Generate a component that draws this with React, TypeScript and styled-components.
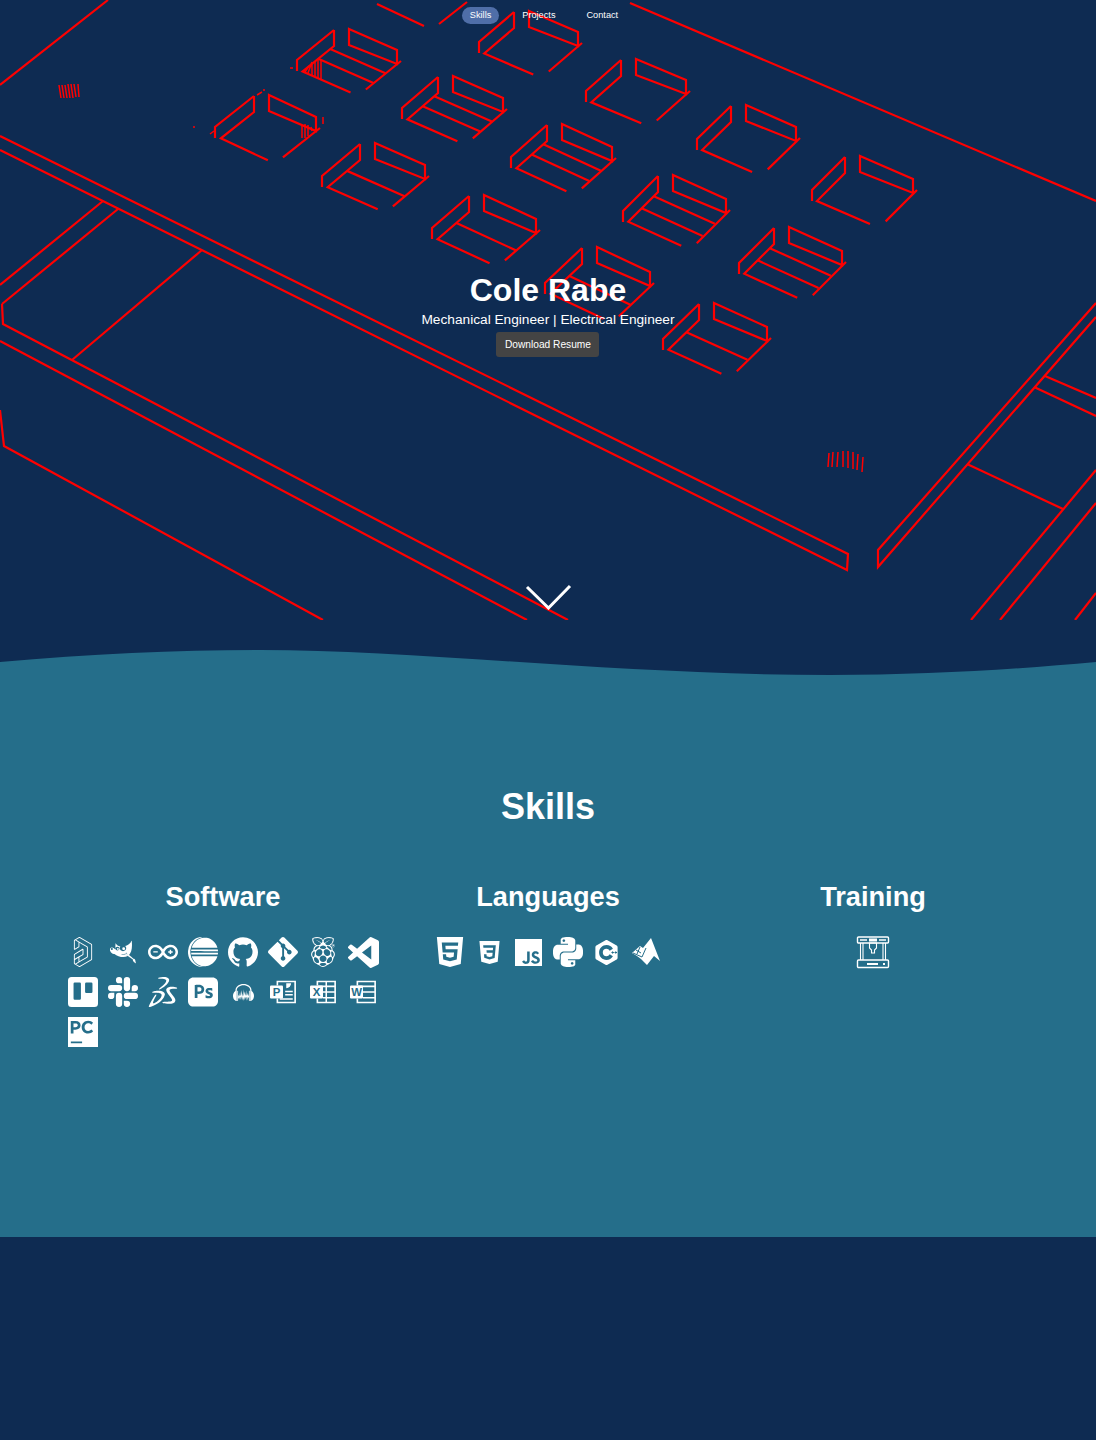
import styled, { createGlobalStyle } from "styled-components";
import type { IconType } from "react-icons";
import {
  SiAltiumdesigner,
  SiGimp,
  SiArduino,
  SiEclipseide,
  SiGithub,
  SiGit,
  SiRaspberrypi,
  SiTrello,
  SiSlack,
  SiDassaultsystemes,
  SiAdobephotoshop,
  SiAudacity,
  SiPycharm,
  SiHtml5,
  SiCss3,
  SiJavascript,
  SiPython,
  SiCplusplus,
} from "react-icons/si";

const NAVY = "#0e2b52";
const TEAL = "#256e8a";

const GlobalStyle = createGlobalStyle`
  html, body {
    margin: 0;
    padding: 0;
    background: ${NAVY};
    font-family: "Liberation Sans", Arial, sans-serif;
    color: #fff;
  }
`;

const Page = styled.div`
  width: 1096px;
  min-height: 1440px;
  background: ${NAVY};
`;

const Hero = styled.header`
  position: relative;
  height: 620px;
  overflow: hidden;
  display: flex;
  flex-direction: column;
  align-items: center;
`;

const Backdrop = styled.svg`
  position: absolute;
  inset: 0;
  width: 1096px;
  height: 620px;
  fill: none;
  stroke: #f00;
  stroke-width: 2.2;
`;

const Nav = styled.nav`
  position: relative;
  display: flex;
  gap: 15px;
  padding: 7px 8px 0 0;
`;

const NavLink = styled.a<{ $active?: boolean }>`
  height: 17px;
  line-height: 17px;
  padding: 0 8px;
  font-size: 9.2px;
  border-radius: 9px;
  color: #fff;
  background: ${(p) => (p.$active ? "#4f6ea8" : "transparent")};
`;

const HeroText = styled.div`
  position: relative;
  display: flex;
  flex-direction: column;
  align-items: center;
  margin-top: 248px;
`;

const Name = styled.h1`
  margin: 0;
  font-size: 32px;
  line-height: 37px;
  font-weight: 700;
`;

const Role = styled.p`
  margin: 3px 0 0;
  font-size: 13.7px;
  line-height: 16px;
`;

const ResumeButton = styled.button`
  margin-top: 4px;
  width: 103px;
  height: 25px;
  padding: 0;
  border: 0;
  border-radius: 3px;
  background: #444444;
  color: #fff;
  font: 10.2px "Liberation Sans", Arial, sans-serif;
`;

const ScrollArrow = styled.svg`
  position: absolute;
  left: 525px;
  top: 584px;
  width: 47px;
  height: 26px;
  fill: none;
  stroke: #fff;
  stroke-width: 3;
`;

const Wave = styled.svg`
  display: block;
  width: 1096px;
  height: 30px;
  margin-top: 30px;
`;

const SkillsSection = styled.section`
  background: ${TEAL};
  height: 557px;
  padding-top: 105px;
  box-sizing: border-box;
  display: flex;
  flex-direction: column;
  align-items: center;
`;

const SkillsTitle = styled.h2`
  margin: 0;
  font-size: 36px;
  line-height: 44px;
  font-weight: 700;
`;

const Columns = styled.div`
  display: grid;
  grid-template-columns: repeat(3, 325px);
  margin-top: 52px;
`;

const Column = styled.div`
  display: flex;
  flex-direction: column;
  align-items: center;
`;

const ColumnTitle = styled.h3`
  margin: 0 0 19px;
  font-size: 27.2px;
  line-height: 32px;
  font-weight: 700;
`;

const IconGrid = styled.div<{ $start?: boolean }>`
  display: flex;
  flex-wrap: wrap;
  width: 320px;
  justify-content: ${(p) => (p.$start ? "flex-start" : "center")};
`;

const IconCell = styled.div<{ $size: number; $pitch: number }>`
  width: ${(p) => p.$pitch}px;
  height: 40px;
  display: flex;
  align-items: center;
  justify-content: center;
  color: #fff;
  font-size: ${(p) => p.$size}px;
`;

type Vec = [number, number];
// p: top of left wall, l: along the left wall, r: along the right wall, lines: floor lines as fraction of the left edge
type Cell = { p: Vec; l: Vec; r: Vec; lines: number[] };

const cells: Cell[] = [
  { p: [514, 12], l: [-35, 30], r: [49, 21], lines: [] },
  { p: [334, 30], l: [-37, 30], r: [48, 21], lines: [0.12, 0.5] },
  { p: [621, 60], l: [-35, 31], r: [50, 21], lines: [] },
  { p: [438, 77], l: [-36, 31], r: [50, 22], lines: [0.12, 0.5] },
  { p: [254, 96], l: [-39, 31], r: [47, 22], lines: [] },
  { p: [360, 144], l: [-38, 32], r: [50, 22], lines: [0.4] },
  { p: [547, 125], l: [-36, 32], r: [50, 23], lines: [0.12, 0.5] },
  { p: [731, 106], l: [-34, 33], r: [50, 22], lines: [] },
  { p: [845, 157], l: [-33, 33], r: [53, 23], lines: [] },
  { p: [469, 196], l: [-37, 32], r: [52, 24], lines: [0.4] },
  { p: [658, 176], l: [-35, 35], r: [53, 24], lines: [0.14, 0.55] },
  { p: [774, 228], l: [-35, 35], r: [53, 24], lines: [0.14, 0.55] },
  { p: [582, 248], l: [-37, 35], r: [53, 25], lines: [0.4] },
  { p: [699, 304], l: [-36, 35], r: [53, 24], lines: [0.41] },
];

const structure = [
  "M108 0 0 85",
  "M377 4 424 26",
  "M439 24 467 2",
  "M630 3 1096 201",
  "M0 136 848 554 847 570 0 150",
  "M0 285 103 201",
  "M2 304 118 209",
  "M72 360 202 250",
  "M2 304 3 324 568 620",
  "M0 341 527 620",
  "M0 410 4 446 323 620",
  "M1096 303 878 550 878 567 1096 317",
  "M1045 376 1096 398",
  "M1034 387 1096 416",
  "M967 464 1063 509",
  "M971 620 1096 470",
  "M1000 620 1096 503",
  "M1075 620 1096 593",
];

const hatches = [
  "M59 85 61 98M62 85 64 98M65 85 67 98M68 84 70 98M71 84 73 98M74 84 76 97M78 84 79 97",
  "M829 453 828 467M833 452 832 467M838 452 837 467M843 451 843 467M848 451 848 468M853 452 853 469M858 454 857 470M863 457 862 472",
  "M305 72 309 66M308 73 312 62M312 75 312 63M315 76 315 61M318 78 318 60M321 79 321 60",
  "M302 125 302 138M305 124 305 138M308 125 308 136M311 127 312 131",
  "M323 117 323 124M290 68 293 68M193 127 195 127M263 90 265 90M210 134 214 131M257 95 262 92",
];

const BoardCell = ({ p, l, r, lines }: Cell) => {
  const [x, y] = p;
  const bx = x;
  const by = y + 16;
  const fx = bx + l[0] * 0.85;
  const fy = by + l[1] * 0.85;
  const rx = x + 15;
  const ry = y - 1;
  const k1x = rx + r[0] + 4;
  const k1y = ry + r[1] + 11;
  return (
    <g>
      <path d={`M${x} ${y}V${by}L${fx} ${fy}l${r[0]} ${r[1]}`} />
      <path d={`M${x} ${y}L${x + l[0]} ${y + l[1]}v11`} />
      <path d={`M${rx} ${ry}l${r[0]} ${r[1]}v14L${rx} ${ry + 16}Z`} />
      <path d={`M${k1x} ${k1y}l${l[0] * 0.95} ${l[1] * 0.95}`} />
      {lines.map((t) => (
        <path
          key={t}
          d={`M${bx + (fx - bx) * t} ${by + (fy - by) * t}l${r[0] * 1.15} ${r[1] * 1.15}`}
        />
      ))}
    </g>
  );
};

const PrinterIcon = () => (
  <svg width="34" height="34" viewBox="0 0 34 34" fill="none" stroke="#fff" strokeWidth="1.4">
    <rect x="1.5" y="2" width="31" height="6" rx="1" />
    <path d="M4 5h7M23 5h7" strokeWidth="1.6" />
    <rect x="13" y="3.5" width="8" height="3" fill="#fff" stroke="none" />
    <path d="M4.5 8V25M7 8V25M27 8V25M29.5 8V25" strokeWidth="1.1" />
    <path d="M13.5 8h7v5l-2 2v3h-3v-3l-2-2z" strokeWidth="1.1" />
    <rect x="1.5" y="25" width="31" height="7.5" rx="1" />
    <path d="M11 29h11M27 29h2" strokeWidth="1.8" />
  </svg>
);

const MatlabIcon: IconType = () => (
  <svg width="30" height="30" viewBox="0 0 30 30">
    <path d="M1 16 9 9 12 11 20 1 29 24 23 19 16 28 10 22 6 19Z" fill="#fff" />
    <path d="M2 16 11 20 15 11M9 10 6 17M5 13 10 16" fill="none" stroke={TEAL} strokeWidth="1" />
  </svg>
);

const VsCodeIcon: IconType = () => (
  <svg width="31" height="31" viewBox="0 0 24 24" fill="#fff">
    <path d="M23.15 2.587 18.21.21a1.494 1.494 0 0 0-1.705.29l-9.46 8.63-4.12-3.128a.999.999 0 0 0-1.276.057L.327 7.261A1 1 0 0 0 .326 8.74L3.899 12 .326 15.26a1 1 0 0 0 .001 1.479L1.65 17.94a.999.999 0 0 0 1.276.057l4.12-3.128 9.46 8.63a1.492 1.492 0 0 0 1.704.29l4.942-2.377A1.5 1.5 0 0 0 24 20.06V3.939a1.5 1.5 0 0 0-.85-1.352zm-5.146 14.861L10.826 12l7.178-5.448v10.896z" />
  </svg>
);

const OfficeTile = ({ letter }: { letter: string }) => (
  <>
    <rect x="0" y="6" width="12" height="12" rx="1" fill="#fff" />
    <text
      x="6"
      y="15.6"
      textAnchor="middle"
      fontSize="10.5"
      fontWeight="700"
      fontFamily="Liberation Sans, Arial, sans-serif"
      fill={TEAL}
    >
      {letter}
    </text>
  </>
);

const PowerPointIcon: IconType = () => (
  <svg width="26" height="26" viewBox="0 0 24 24">
    <path d="M6.8 6V2.3h16.4v19.4H6.8V18" fill="none" stroke="#fff" strokeWidth="1.5" />
    <OfficeTile letter="P" />
    <path d="M15 4h4.5a4.5 4.5 0 0 1-4.5 4.5z" fill="#fff" />
    <path d="M14 11.5h7M14 14.5h7M9 18.5h12" stroke="#fff" strokeWidth="1.4" />
  </svg>
);

const ExcelIcon: IconType = () => (
  <svg width="26" height="26" viewBox="0 0 24 24">
    <path d="M6.8 6V2.3h16.4v19.4H6.8V18" fill="none" stroke="#fff" strokeWidth="1.5" />
    <path d="M15 2.5v19M7 6.8h16M12 12h11M12 17.3h11" stroke="#fff" strokeWidth="1.4" />
    <OfficeTile letter="X" />
  </svg>
);

const WordIcon: IconType = () => (
  <svg width="26" height="26" viewBox="0 0 24 24">
    <path d="M6.8 6V2.3h16.4v19.4H6.8V18" fill="none" stroke="#fff" strokeWidth="1.5" />
    <path d="M7 6.8h16M12 12h11M12 17.3h11" stroke="#fff" strokeWidth="1.4" />
    <OfficeTile letter="W" />
  </svg>
);

type Skill = { Icon: IconType; size: number };

const software: Skill[] = [
  { Icon: SiAltiumdesigner, size: 30 },
  { Icon: SiGimp, size: 26 },
  { Icon: SiArduino, size: 30 },
  { Icon: SiEclipseide, size: 30 },
  { Icon: SiGithub, size: 30 },
  { Icon: SiGit, size: 30 },
  { Icon: SiRaspberrypi, size: 30 },
  { Icon: VsCodeIcon, size: 30 },
  { Icon: SiTrello, size: 30 },
  { Icon: SiSlack, size: 30 },
  { Icon: SiDassaultsystemes, size: 30 },
  { Icon: SiAdobephotoshop, size: 30 },
  { Icon: SiAudacity, size: 21 },
  { Icon: PowerPointIcon, size: 26 },
  { Icon: ExcelIcon, size: 26 },
  { Icon: WordIcon, size: 26 },
  { Icon: SiPycharm, size: 30 },
];

const languages: Skill[] = [
  { Icon: SiHtml5, size: 30 },
  { Icon: SiCss3, size: 23 },
  { Icon: SiJavascript, size: 27 },
  { Icon: SiPython, size: 30 },
  { Icon: SiCplusplus, size: 25 },
  { Icon: MatlabIcon, size: 30 },
];

export default function App() {
  return (
    <Page>
      <GlobalStyle />
      <Hero>
        <Backdrop viewBox="0 0 1096 620">
          {structure.map((d) => (
            <path key={d} d={d} />
          ))}
          {cells.map((c) => (
            <BoardCell key={c.p.join("-")} {...c} />
          ))}
          {hatches.map((d) => (
            <path key={d} d={d} strokeWidth="1.5" />
          ))}
        </Backdrop>
        <Nav>
          <NavLink $active>Skills</NavLink>
          <NavLink>Projects</NavLink>
          <NavLink>Contact</NavLink>
        </Nav>
        <HeroText>
          <Name>Cole Rabe</Name>
          <Role>Mechanical Engineer | Electrical Engineer</Role>
          <ResumeButton>Download Resume</ResumeButton>
        </HeroText>
        <ScrollArrow viewBox="0 0 47 26">
          <path d="M2 3 23.5 24 45 2" />
        </ScrollArrow>
      </Hero>
      <Wave viewBox="0 0 1096 30">
        <path d="M0 12C90 4 180 0 260 0 420 0 620 25 830 25 930 25 1020 19 1096 12V30H0Z" fill={TEAL} />
      </Wave>
      <SkillsSection>
        <SkillsTitle>Skills</SkillsTitle>
        <Columns>
          <Column>
            <ColumnTitle>Software</ColumnTitle>
            <IconGrid $start>
              {software.map(({ Icon, size }, i) => (
                <IconCell key={i} $size={size} $pitch={40}>
                  <Icon />
                </IconCell>
              ))}
            </IconGrid>
          </Column>
          <Column>
            <ColumnTitle>Languages</ColumnTitle>
            <IconGrid>
              {languages.map(({ Icon, size }, i) => (
                <IconCell key={i} $size={size} $pitch={39.2}>
                  <Icon />
                </IconCell>
              ))}
            </IconGrid>
          </Column>
          <Column>
            <ColumnTitle>Training</ColumnTitle>
            <IconGrid>
              <IconCell $size={34} $pitch={40}>
                <PrinterIcon />
              </IconCell>
            </IconGrid>
          </Column>
        </Columns>
      </SkillsSection>
    </Page>
  );
}
